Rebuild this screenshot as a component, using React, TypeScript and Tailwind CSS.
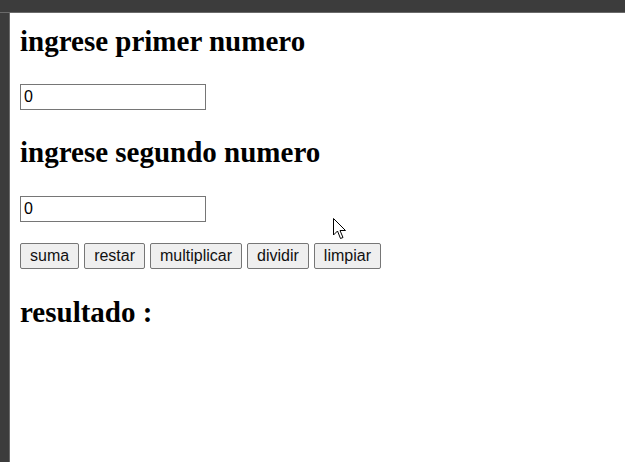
import { useState } from 'react';

const ops = ['suma', 'restar', 'multiplicar', 'dividir', 'limpiar'];

export default function App() {
  const [a, setA] = useState('0');
  const [b, setB] = useState('0');

  return (
    <div className="relative flex h-[462px] w-[625px] flex-col overflow-hidden bg-white">
      {/* window chrome */}
      <div className="h-[13px] shrink-0 border-b border-[#6a6a6a] bg-[#3c3c3c]" />
      <div className="flex flex-1">
        <div className="w-[10px] shrink-0 border-r border-[#6a6a6a] bg-[#3c3c3c]" />

        {/* page */}
        <div className="flex flex-1 flex-col items-start pl-[10px] font-['Liberation_Serif',serif] text-black">
          <h2 className="mt-[12px] text-[29px] leading-[33px] font-bold">ingrese primer numero</h2>
          <input
            value={a}
            onChange={(e) => setA(e.target.value)}
            className="mt-[26px] h-[26px] w-[186px] border border-[#767676] px-[3px] font-['Liberation_Sans',sans-serif] text-[16px] text-black outline-none"
          />

          <h2 className="mt-[26px] text-[29px] leading-[33px] font-bold">ingrese segundo numero</h2>
          <input
            value={b}
            onChange={(e) => setB(e.target.value)}
            className="mt-[27px] h-[26px] w-[186px] border border-[#767676] px-[3px] font-['Liberation_Sans',sans-serif] text-[16px] text-black outline-none"
          />

          <div className="mt-[21px] flex gap-[5px]">
            {ops.map((op) => (
              <button
                key={op}
                className="h-[26px] rounded-[2px] border border-[#767676] bg-[#efefef] px-[9px] font-['Liberation_Sans',sans-serif] text-[16px] text-[#111]"
              >
                {op}
              </button>
            ))}
          </div>

          <h2 className="mt-[27px] text-[29px] leading-[33px] font-bold">resultado :</h2>
        </div>
      </div>

      {/* mouse pointer */}
      <svg className="absolute left-[333px] top-[218px]" width="14" height="22" viewBox="0 0 14 22">
        <path d="M0.5 0.5 L0.5 17 L4.5 13 L7.5 20.5 L10 19.5 L7 12.5 L12.5 12.5 Z" fill="#fff" stroke="#000" strokeWidth="1" />
      </svg>
    </div>
  );
}
